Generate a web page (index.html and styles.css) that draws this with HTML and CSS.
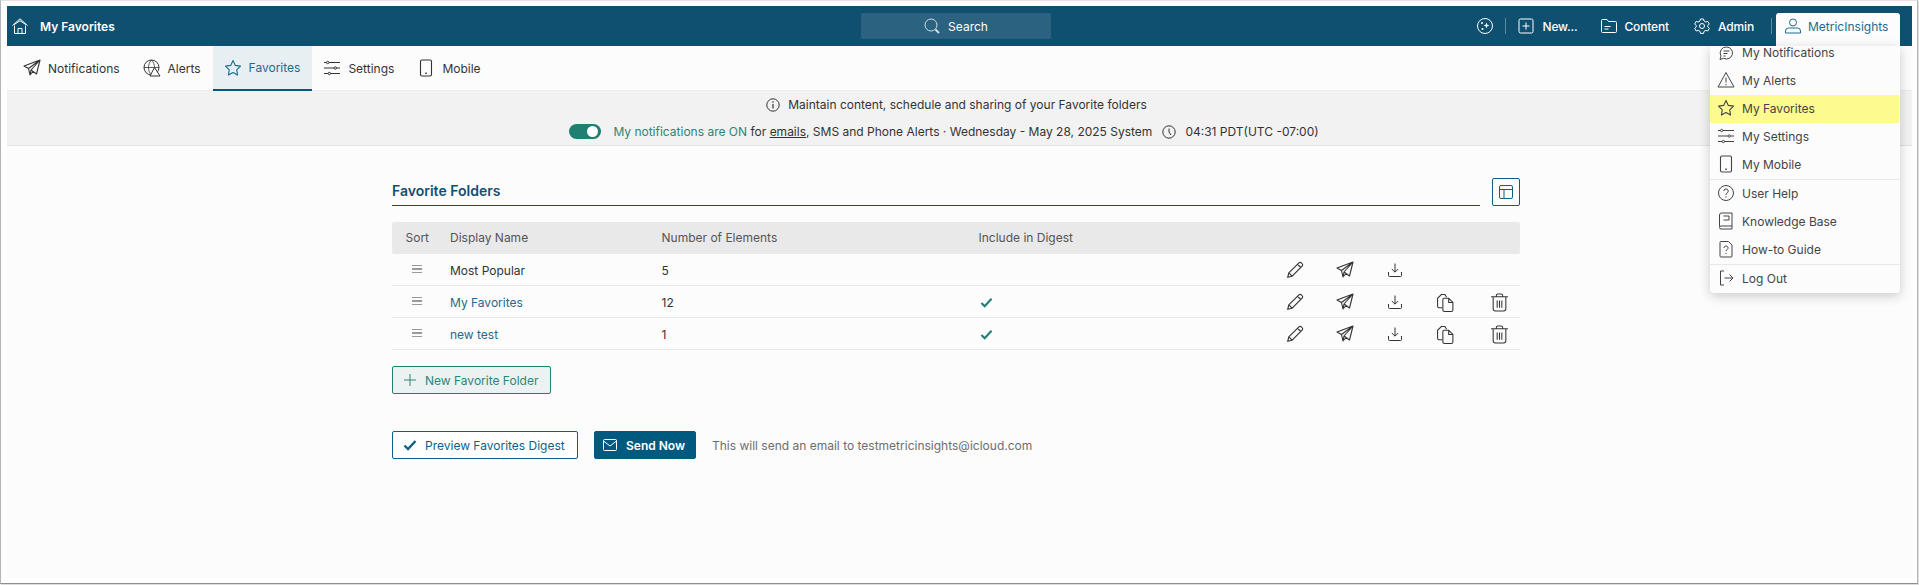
FILE: index.html
```html
<!DOCTYPE html>
<html lang="en">
<head>
<meta charset="utf-8">
<title>My Favorites</title>
<link rel="stylesheet" href="styles.css">
</head>
<body>
<svg class="defs" width="0" height="0" aria-hidden="true">
  <defs>
    <symbol id="plane" viewBox="0 0 18 18"><path d="M17 1 1 7l4.500 2.500L7 16l3-3.500 3.500 2.500zM5.500 9.500 17 1 8 11l-1 5M8 11l5.500 4" fill="none" stroke="currentColor" stroke-width="1.1" stroke-linejoin="round"/></symbol>
    <symbol id="star" viewBox="0 0 18 18"><path d="M9 1.500l2.300 4.900 5.200.7-3.800 3.700.9 5.300L9 13.500l-4.600 2.600.9-5.300L1.500 7.100l5.200-.7z" fill="none" stroke="currentColor" stroke-width="1.100" stroke-linejoin="round"/></symbol>
    <symbol id="sliders" viewBox="0 0 18 18"><path d="M1 3.500h2.500M6 3.500h11M1 9h10M13.500 9H17M1 14.500h4M7.500 14.500H17" fill="none" stroke="currentColor" stroke-width="1.100"/><circle cx="4.700" cy="3.500" r="1.200" fill="none" stroke="currentColor"/><circle cx="12.300" cy="9" r="1.200" fill="none" stroke="currentColor"/><circle cx="6.300" cy="14.500" r="1.200" fill="none" stroke="currentColor"/></symbol>
    <symbol id="phone" viewBox="0 0 18 18"><rect x="3.500" y="1" width="11" height="16" rx="1.500" fill="none" stroke="currentColor" stroke-width="1.100"/><rect x="8.300" y="13.500" width="1.500" height="1.500" fill="currentColor"/></symbol>
    <symbol id="pencil" viewBox="0 0 16 16"><path d="M1.500 14.500l1-4L11.500 1.700a1.500 1.500 0 0 1 2.200 0l.6.6a1.500 1.500 0 0 1 0 2.200L5.500 13.500zM2.500 10.500l3 3M10.300 3l3 3" fill="none" stroke="currentColor" stroke-width="1" stroke-linejoin="round"/></symbol>
    <symbol id="download" viewBox="0 0 16 16"><path d="M8 1.500v8.500M4.800 7 8 10.200 11.200 7M1.500 10v3.500a1 1 0 0 0 1 1h11a1 1 0 0 0 1-1V10" fill="none" stroke="currentColor" stroke-width="1"/></symbol>
    <symbol id="copy" viewBox="0 0 18 18"><path d="M6 14H3a1.500 1.500 0 0 1-1.500-1.500V5L5 1.500h3.500L10 4" fill="none" stroke="currentColor" stroke-width="1"/><path d="M6.500 6.500A1.500 1.500 0 0 1 8 5h4l4 4v7a1.500 1.500 0 0 1-1.500 1.500H8A1.500 1.500 0 0 1 6.500 16zM12 5v4h4" fill="none" stroke="currentColor" stroke-width="1"/></symbol>
    <symbol id="trash" viewBox="0 0 18 18"><path d="M1 3.500h16M3 3.500V15a2 2 0 0 0 2 2h8a2 2 0 0 0 2-2V3.500M6 3.500V2.500A1.500 1.500 0 0 1 7.500 1h3A1.500 1.500 0 0 1 12 2.500v1M6.800 7v7M9 7v7M11.200 7v7" fill="none" stroke="currentColor" stroke-width="1"/></symbol>
    <symbol id="check" viewBox="0 0 14 12"><path d="M1.500 6.500 5 10l7.500-8" fill="none" stroke="currentColor" stroke-width="2.300"/></symbol>
  </defs>
</svg>
<div class="frame">
  <div class="page">
    <header class="topbar">
      <div class="top-left">
        <svg class="ico-16" viewBox="0 0 16 16"><path d="M.5 7.500 8 .8l7.500 6.700M2.200 6.500 8 2.800l5.800 3.700M2.500 7.500v8h11v-8M6 15.500v-5h4v5" fill="none" stroke="currentColor" stroke-width="1"/></svg>
        <span class="top-title">My Favorites</span>
      </div>
      <div class="search">
        <svg class="ico-16" viewBox="0 0 16 16"><circle cx="7" cy="7" r="6" fill="none" stroke="#cfdfe7" stroke-width="1"/><path d="M11.500 11.500l3.500 3.500" stroke="#cfdfe7" stroke-width="2"/></svg>
        <span>Search</span>
      </div>
      <div class="top-right">
        <svg class="ico-16 spark" viewBox="0 0 16 16"><circle cx="8" cy="8" r="7.500" fill="none" stroke="currentColor"/><path d="M9.500 4.500l.8 2.200 2.200.8-2.200.8-.8 2.200-.8-2.200-2.200-.8 2.200-.8z" fill="currentColor"/><circle cx="5" cy="5" r="1" fill="currentColor"/><circle cx="5.500" cy="11" r="1" fill="currentColor"/></svg>
        <span class="sep sep-a"></span>
        <svg class="ico-16" viewBox="0 0 16 16"><rect x="1" y="1" width="14" height="14" rx="1.500" fill="none" stroke="currentColor"/><path d="M8 4.500v7M4.500 8h7" stroke="currentColor"/></svg>
        <span class="top-link new">New...</span>
        <svg class="ico-16" viewBox="0 0 16 16"><path d="M.5 2.500a1 1 0 0 1 1-1H6l1.500 2h7a1 1 0 0 1 1 1v9a1 1 0 0 1-1 1h-13a1 1 0 0 1-1-1zM3.500 8.500h6M3.500 11h4" fill="none" stroke="currentColor"/></svg>
        <span class="top-link content">Content</span>
        <svg class="ico-16" viewBox="0 0 16 16"><path d="M6.500 1h3l.5 2 1.800 1 2-.6 1.500 2.600-1.500 1.500v1.400l1.500 1.500-1.500 2.600-2-.6-1.800 1-.5 2h-3l-.5-2-1.800-1-2 .6L.7 10.400 2.200 9V7.500L.7 6l1.500-2.600 2 .6L6 3z" fill="none" stroke="currentColor"/><circle cx="8" cy="8" r="2.500" fill="none" stroke="currentColor"/></svg>
        <span class="top-link admin">Admin</span>
        <span class="sep sep-b"></span>
        <div class="user-tab">
          <svg class="ico-16" viewBox="0 0 16 16"><circle cx="8" cy="4.500" r="3.500" fill="none" stroke="currentColor"/><path d="M.5 15v-2a3 3 0 0 1 3-3h9a3 3 0 0 1 3 3v2z" fill="none" stroke="currentColor"/></svg>
          <span>MetricInsights</span>
        </div>
      </div>
    </header>

    <nav class="tabs">
      <a class="tab"><svg class="ico-18"><use href="#plane"/></svg><span>Notifications</span></a>
      <a class="tab"><svg class="ico-18" viewBox="0 0 18 18"><circle cx="8.500" cy="8.500" r="7.500" fill="none" stroke="currentColor"/><path d="M1 8.500h15M8.500 1c-4 4-4 11 0 15M8.500 1c4 4 4 11 0 15" fill="none" stroke="currentColor" stroke-width=".8"/><path d="M11.500 8.500l5.500 8.500H7z" fill="#fcfcfc" stroke="currentColor"/></svg><span>Alerts</span></a>
      <a class="tab tab-active"><svg class="ico-18"><use href="#star"/></svg><span>Favorites</span></a>
      <a class="tab"><svg class="ico-18"><use href="#sliders"/></svg><span>Settings</span></a>
      <a class="tab"><svg class="ico-18"><use href="#phone"/></svg><span>Mobile</span></a>
    </nav>

    <section class="banner">
      <div class="banner-row row-info">
        <svg class="ico-14" viewBox="0 0 14 14"><circle cx="7" cy="7" r="6.200" fill="none" stroke="currentColor"/><path d="M7 6v4.500" stroke="currentColor" stroke-width="1.200"/><circle cx="7" cy="4" r=".8" fill="currentColor"/></svg>
        <span>Maintain content, schedule and sharing of your Favorite folders</span>
      </div>
      <div class="banner-row row-notify">
        <span class="toggle"><span class="knob"></span></span>
        <span><span class="on">My notifications are ON</span> for <u>emails</u>, SMS and Phone Alerts · Wednesday - May 28, 2025 System</span>
        <svg class="ico-14 clock" viewBox="0 0 14 14"><circle cx="7" cy="7" r="6.200" fill="none" stroke="currentColor"/><path d="M7 3.500V7l2 3" fill="none" stroke="currentColor"/></svg>
        <span>04:31 PDT(UTC -07:00)</span>
      </div>
    </section>

    <main class="main">
      <div class="head-row">
        <h1 class="section-title">Favorite Folders</h1>
        <button class="layout-btn"><svg class="ico-14" viewBox="0 0 14 14"><rect x=".5" y=".5" width="13" height="13" rx="1.500" fill="none" stroke="currentColor"/><path d="M.5 4.500h13M5 4.500v9" stroke="currentColor"/></svg></button>
      </div>

      <div class="grid grid-head">
        <span class="c-sort">Sort</span><span>Display Name</span><span>Number of Elements</span><span>Include in Digest</span><span></span>
      </div>

      <div class="grid row">
        <span class="c-sort grip"><i></i><i></i><i></i></span>
        <span>Most Popular</span><span>5</span><span></span>
        <span class="acts">
          <svg class="a-pen"><use href="#pencil"/></svg><svg class="a-plane"><use href="#plane"/></svg><svg class="a-dl"><use href="#download"/></svg>
        </span>
      </div>
      <div class="grid row">
        <span class="c-sort grip"><i></i><i></i><i></i></span>
        <span class="link">My Favorites</span><span>12</span>
        <span><svg class="check"><use href="#check"/></svg></span>
        <span class="acts">
          <svg class="a-pen"><use href="#pencil"/></svg><svg class="a-plane"><use href="#plane"/></svg><svg class="a-dl"><use href="#download"/></svg><svg class="a-copy"><use href="#copy"/></svg><svg class="a-trash"><use href="#trash"/></svg>
        </span>
      </div>
      <div class="grid row">
        <span class="c-sort grip"><i></i><i></i><i></i></span>
        <span class="link">new test</span><span>1</span>
        <span><svg class="check"><use href="#check"/></svg></span>
        <span class="acts">
          <svg class="a-pen"><use href="#pencil"/></svg><svg class="a-plane"><use href="#plane"/></svg><svg class="a-dl"><use href="#download"/></svg><svg class="a-copy"><use href="#copy"/></svg><svg class="a-trash"><use href="#trash"/></svg>
        </span>
      </div>

      <button class="btn btn-new"><svg class="ico-14" viewBox="0 0 14 14"><path d="M7 1v12M1 7h12" stroke="currentColor"/></svg><span>New Favorite Folder</span></button>

      <div class="digest">
        <button class="btn btn-preview"><svg class="ico-14"><use href="#check"/></svg><span>Preview Favorites Digest</span></button>
        <button class="btn btn-send"><svg class="ico-14" viewBox="0 0 14 14"><rect x=".5" y="1.500" width="13" height="11" rx="1" fill="none" stroke="currentColor"/><path d="M.5 3 7 8l6.500-5" fill="none" stroke="currentColor"/></svg><span>Send Now</span></button>
        <span class="digest-note">This will send an email to testmetricinsights@icloud.com</span>
      </div>
    </main>
  </div>

  <div class="menu">
    <div class="menu-group">
      <a class="menu-item"><svg class="ico-18" viewBox="0 0 18 18"><path d="M9.500 4a6 6 0 1 1-2.800 11.300L3 16.500l1-3.500A6 6 0 0 1 9.500 4zM6.500 8h6M6.500 10.500h4M6.500 13h2" fill="none" stroke="currentColor"/></svg><span>My Notifications</span></a>
      <a class="menu-item"><svg class="ico-18" viewBox="0 0 18 18"><path d="M9 1.500l8 14.500H1zM9 6.500v5M9 13v1.300" fill="none" stroke="currentColor" stroke-linejoin="round"/></svg><span>My Alerts</span></a>
      <a class="menu-item menu-hl"><svg class="ico-18"><use href="#star"/></svg><span>My Favorites</span></a>
      <a class="menu-item"><svg class="ico-18"><use href="#sliders"/></svg><span>My Settings</span></a>
      <a class="menu-item"><svg class="ico-18"><use href="#phone"/></svg><span>My Mobile</span></a>
    </div>
    <div class="menu-group">
      <a class="menu-item"><svg class="ico-18" viewBox="0 0 18 18"><circle cx="9" cy="9" r="7.500" fill="none" stroke="currentColor"/><path d="M6.800 7a2.200 2.200 0 1 1 3.300 2c-.8.500-1.100 1-1.100 2M9 12.300v1.200" fill="none" stroke="currentColor"/></svg><span>User Help</span></a>
      <a class="menu-item"><svg class="ico-18" viewBox="0 0 18 18"><path d="M2.500 14.500V3A2 2 0 0 1 4.500 1H15v13H4a1.500 1.500 0 0 0 0 3h11v-3M6.500 4h5.500v4H6.500" fill="none" stroke="currentColor"/></svg><span>Knowledge Base</span></a>
      <a class="menu-item"><svg class="ico-18" viewBox="0 0 18 18"><path d="M3 2.500a1 1 0 0 1 1-1h7.500L15 5v11a1 1 0 0 1-1 1H4a1 1 0 0 1-1-1zM7 8a2 2 0 1 1 3 1.700c-.7.400-1 .8-1 1.500M9 13v1" fill="none" stroke="currentColor"/></svg><span>How-to Guide</span></a>
    </div>
    <div class="menu-group">
      <a class="menu-item"><svg class="ico-18" viewBox="0 0 18 18"><path d="M7 2H3.500v14H7M7.500 9H16M12.500 5.500 16 9l-3.500 3.500" fill="none" stroke="currentColor"/></svg><span>Log Out</span></a>
    </div>
  </div>
</div>
</body>
</html>
```

FILE: styles.css
```css
* { box-sizing: border-box; }
html, body { height: 100%; }
body {
  margin: 0;
  background: #fff;
  font-family: Inter, "Liberation Sans", sans-serif;
  font-size: 12px;
  color: #333;
  overflow: hidden;
}
.defs { position: absolute; }
.frame {
  position: relative;
  width: 1918px;
  height: 584px;
  padding: 5px 5px 5px 6px;
  border-top: 1px solid #e2e2e2;
  border-left: 1px solid #b5b5b5;
  border-right: 1px solid #b5b5b5;
  border-bottom: 1px solid #8f8f8f;
  box-shadow: 1px 1px 1px #ddd;
  background: #fff;
  display: flex;
}
.page {
  flex: 1;
  display: flex;
  flex-direction: column;
  background: #fcfcfc;
  min-width: 0;
}
svg { display: block; flex: none; }
.ico-18 { width: 18px; height: 18px; }
.ico-16 { width: 16px; height: 16px; }
.ico-14 { width: 14px; height: 14px; }

.topbar {
  height: 40px;
  flex: none;
  background: #0f5071;
  color: #fff;
  display: grid;
  grid-template-columns: 854px 190px 1fr;
  align-items: center;
}
.top-left { display: flex; align-items: center; gap: 12px; padding-left: 5px; }
.top-title { font-weight: 600; }
.search {
  height: 26px;
  background: #2a6280;
  display: flex;
  align-items: center;
  justify-content: center;
  gap: 8px;
  border-radius: 2px;
}
.top-right { display: flex; align-items: center; justify-content: flex-end; height: 100%; }
.top-link { font-weight: 500; margin-left: 8px; letter-spacing: -.15px; }
.spark { margin-right: 12px; }
.sep { width: 1px; height: 16px; background: #5b8aa2; }
.sep-a { margin-right: 12px; }
.new { margin-right: 24px; }
.content { margin-left: 7px; margin-right: 25px; }
.admin { margin-right: 17px; }
.sep-b { margin-right: 4px; }
.user-tab {
  display: flex;
  align-items: center;
  gap: 7px;
  height: 33px;
  width: 124px;
  margin: 7px 12px 0 0;
  padding: 0 0 7px 9px;
  align-self: flex-start;
  background: #fcfcfc;
  color: #1f6a8d;
  border-radius: 3px 3px 0 0;
}

.tabs {
  flex: none;
  height: 45px;
  display: flex;
  padding-left: 5px;
  border-bottom: 1px solid #ececec;
}
.tab {
  display: flex;
  align-items: center;
  gap: 8px;
  padding: 0 12px;
  color: #333;
}
.tab svg { margin: 0 -1px; }
.tab-active {
  background: #e7eff3;
  color: #1f6a8d;
  border-bottom: 2px solid #005a80;
  margin-bottom: -1px;
}

.banner {
  flex: none;
  height: 55px;
  background: #f2f2f2;
  border-bottom: 1px solid #e2e2e2;
  display: flex;
  flex-direction: column;
  align-items: center;
}
.banner-row { display: flex; align-items: center; height: 27px; gap: 8px; }
.row-info { margin-right: 6px; }
.row-notify { margin-right: 31px; }
.toggle {
  width: 32px;
  height: 15px;
  margin-right: 4px;
  border-radius: 8px;
  background: #1f7f70;
  display: flex;
  align-items: center;
  justify-content: flex-end;
  padding-right: 3px;
}
.knob { width: 11px; height: 11px; border-radius: 50%; background: #fff; }
.on { color: #2d8676; }
.clock { margin: 0 1px 0 2px; }

.main {
  flex: 1;
  width: 1128px;
  padding-top: 32px;
  margin-left: 385px;
}
.head-row { display: flex; align-items: flex-end; gap: 12px; }
.section-title {
  flex: 1;
  margin: 0;
  height: 28px;
  padding: 4px 0 0;
  font-size: 14px;
  line-height: 17px;
  font-weight: 600;
  color: #0f5071;
  border-bottom: 1px solid #0f5071;
}
.layout-btn {
  width: 28px;
  height: 28px;
  padding: 0;
  background: #fcfcfc;
  border: 1px solid #0f5f85;
  border-radius: 2px;
  color: #0f5f85;
  display: flex;
  align-items: center;
  justify-content: center;
}

.grid {
  display: grid;
  grid-template-columns: 58px 211.5px 317px 291.5px 250px;
  align-items: center;
}
.grid-head {
  height: 32px;
  margin-top: 16px;
  padding-bottom: 1px;
  background: #e9e9e9;
  border-radius: 2px;
  color: #555;
}
.c-sort { padding-left: 13.5px; }
.row {
  height: 32px;
  padding-top: 1px;
  border-bottom: 1px solid #e8e8e8;
  color: #333;
}
.link { color: #1f6a8d; }
.grip { display: flex; flex-direction: column; gap: 2px; padding-left: 20px; margin-top: -2px; }
.grip i { display: block; width: 10px; height: 1.5px; background: #999; }
.check { width: 13px; height: 11px; color: #1f7f70; margin-left: 1px; }

.acts {
  display: grid;
  grid-template-columns: repeat(5, 50px);
  align-items: center;
  justify-items: center;
  color: #333;
}
.a-pen { width: 18px; height: 18px; }
.a-plane { width: 18px; height: 18px; }
.a-dl { width: 16px; height: 16px; }
.a-copy { width: 19px; height: 19px; }
.a-trash { width: 19px; height: 19px; margin-left: 8px; }

.btn {
  display: flex;
  align-items: center;
  gap: 8px;
  height: 28px;
  padding: 0 10px;
  border-radius: 2px;
  font: inherit;
  white-space: nowrap;
}
.btn-new {
  margin-top: 16px;
  width: 159px;
  background: #ecf2f1;
  border: 1px solid #1f7f70;
  color: #2d8676;
}
.digest { display: flex; align-items: center; margin-top: 37px; }
.btn-preview {
  width: 186px;
  background: #fff;
  border: 1px solid #0f5f85;
  color: #0f5f85;
}
.btn-send {
  width: 102px;
  margin-left: 16px;
  padding: 0 8px;
  gap: 9px;
  background: #005a80;
  border: 1px solid #005a80;
  color: #fff;
  font-weight: 600;
}
.digest-note { margin-left: 16px; color: #6e6e6e; }

.menu {
  position: absolute;
  left: 1709px;
  top: 45px;
  width: 190px;
  background: #fcfcfc;
  border-radius: 0 0 4px 4px;
  box-shadow: 0 3px 12px rgba(0,0,0,.2);
  z-index: 5;
}
.menu-group { border-bottom: 1px solid #e8e8e8; }
.menu-group:last-child { border-bottom: 0; }
.menu-group:first-child .menu-item:first-child { margin-top: -7px; }
.menu-item {
  display: flex;
  align-items: center;
  gap: 8px;
  height: 28px;
  padding: 0 0 2px 8px;
  color: #444;
}
.menu-item svg { margin: 0 -1px; }
.menu-hl { background: #fdfb8f; margin-right: 1px; }
```
